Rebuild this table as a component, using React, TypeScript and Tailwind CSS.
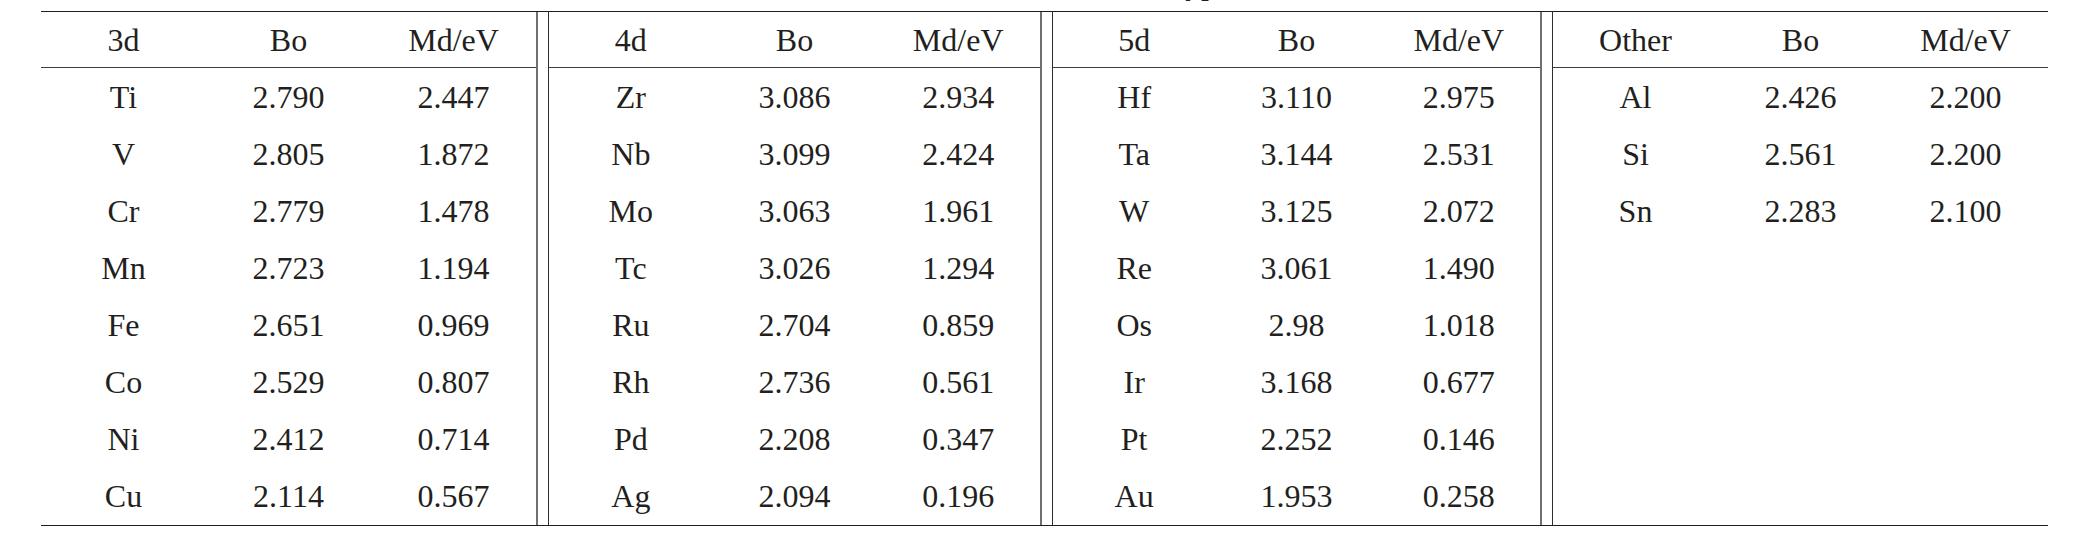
import React from 'react';

type Row = [string, string, string];

interface Group {
  title: string;
  width: string;
  rows: Row[];
}

const groups: Group[] = [
  {
    title: '3d',
    width: 'w-[495px]',
    rows: [
      ['Ti', '2.790', '2.447'],
      ['V', '2.805', '1.872'],
      ['Cr', '2.779', '1.478'],
      ['Mn', '2.723', '1.194'],
      ['Fe', '2.651', '0.969'],
      ['Co', '2.529', '0.807'],
      ['Ni', '2.412', '0.714'],
      ['Cu', '2.114', '0.567'],
    ],
  },
  {
    title: '4d',
    width: 'w-[491px]',
    rows: [
      ['Zr', '3.086', '2.934'],
      ['Nb', '3.099', '2.424'],
      ['Mo', '3.063', '1.961'],
      ['Tc', '3.026', '1.294'],
      ['Ru', '2.704', '0.859'],
      ['Rh', '2.736', '0.561'],
      ['Pd', '2.208', '0.347'],
      ['Ag', '2.094', '0.196'],
    ],
  },
  {
    title: '5d',
    width: 'w-[487px]',
    rows: [
      ['Hf', '3.110', '2.975'],
      ['Ta', '3.144', '2.531'],
      ['W', '3.125', '2.072'],
      ['Re', '3.061', '1.490'],
      ['Os', '2.98', '1.018'],
      ['Ir', '3.168', '0.677'],
      ['Pt', '2.252', '0.146'],
      ['Au', '1.953', '0.258'],
    ],
  },
  {
    title: 'Other',
    width: 'w-[495px]',
    rows: [
      ['Al', '2.426', '2.200'],
      ['Si', '2.561', '2.200'],
      ['Sn', '2.283', '2.100'],
    ],
  },
];

function GroupBlock({ group }: { group: Group }) {
  const filled: (Row | null)[] = Array.from({ length: 8 }, (_, i) => group.rows[i] ?? null);
  return (
    <div className={`${group.width} flex flex-col`}>
      <div className="grid grid-cols-3 h-[56px] items-center border-b border-[#3c3c3c]">
        <div className="text-center">{group.title}</div>
        <div className="text-center">Bo</div>
        <div className="text-center">Md/eV</div>
      </div>
      {filled.map((row, i) => (
        <div key={i} className="grid grid-cols-3 h-[57.1px] items-center">
          <div className="text-center">{row ? row[0] : ''}</div>
          <div className="text-center">{row ? row[1] : ''}</div>
          <div className="text-center">{row ? row[2] : ''}</div>
        </div>
      ))}
    </div>
  );
}

function Separator() {
  return <div className="w-[13px] border-l-2 border-l-[#707070] border-r border-r-[#2e2e2e]" />;
}

export default function App() {
  return (
    <div className="w-[2074px] h-[556px] bg-white pl-[41px] text-[#231f20] text-[32px] leading-none font-['Liberation_Serif','Times_New_Roman',serif]">
      {/* caption above is cut off by the crop; only its descenders peek in */}
      <div className="h-[11px] overflow-hidden">
        <div className="-mt-[33px] pl-[1135px] whitespace-nowrap">type</div>
      </div>
      <div className="w-[2007px] flex border-t-[1.5px] border-b-[1.5px] border-[#1e1e1e]">
        {groups.map((g, i) => (
          <React.Fragment key={g.title}>
            {i > 0 && <Separator />}
            <GroupBlock group={g} />
          </React.Fragment>
        ))}
      </div>
    </div>
  );
}
